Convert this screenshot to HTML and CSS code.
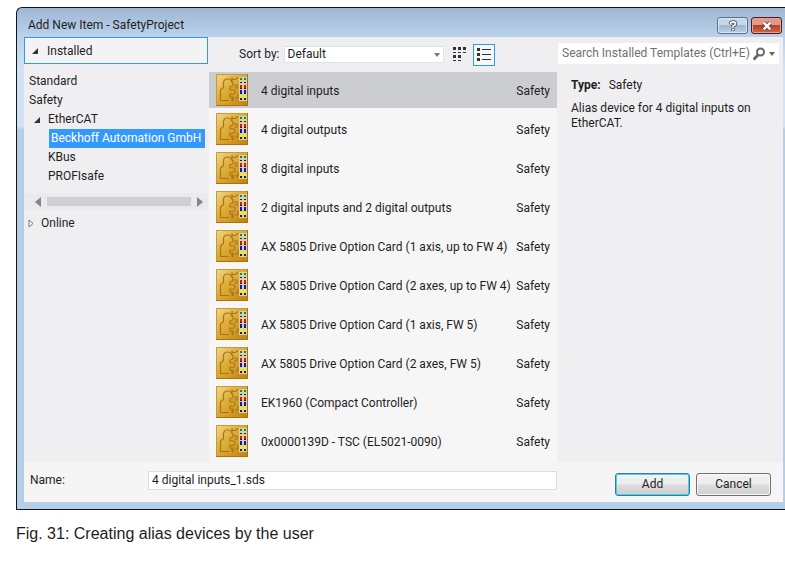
FILE: index.html
```html
<!DOCTYPE html>
<html lang="en">
<head>
<meta charset="utf-8">
<title>Add New Item - SafetyProject</title>
<link rel="stylesheet" href="styles.css">
</head>
<body>
<svg class="defs" aria-hidden="true">
  <defs>
    <linearGradient id="gold" x1="0" y1="0" x2="1" y2="1">
      <stop offset="0" stop-color="#f3d98a"/>
      <stop offset=".4" stop-color="#dfae3a"/>
      <stop offset="1" stop-color="#c08108"/>
    </linearGradient>
    <symbol id="device" viewBox="0 0 32 32">
      <path fill="url(#gold)" d="M0 0h32v32H0z"/>
      <path fill="none" stroke="#c79a38" d="M.5 31.500V.5h31"/>
      <path fill="none" stroke="#a8730c" d="M31.500 0v31.500H0"/>
      <path fill="none" stroke="#a87618" stroke-width="1.200" stroke-linejoin="round" d="M13 26.500H4.500V16l3-2.500V9q0-4 4-4t4 3M16 27v-4M16 3v5l1 1v3l-3 1v3q5-1 5 2t-5 2v3h3v4M16 5.500h3l3-2M18 11h3v3h-3M19 24h3v-4"/>
      <path fill="#d8cfae" d="M23 3h8v24h-8z"/>
      <path fill="#16883c" d="M24 4h2v2h-2zM28 4h2v2h-2z"/>
      <path fill="#222" d="M24 8h2v1h-2zM28 8h2v1h-2zM24 14h2v1h-2zM28 14h2v1h-2zM24 19h2v1h-2zM28 19h2v1h-2zM24 24h2v2h-2zM28 24h2v2h-2z"/>
      <path fill="#cf1818" d="M24 11h2v3h-2zM28 11h2v3h-2z"/>
      <path fill="#1414d0" d="M24 16h2v3h-2zM28 16h2v3h-2z"/>
      <path fill="#f0ee20" d="M24 21h2v3h-2zM28 21h2v3h-2z"/>
    </symbol>
  </defs>
</svg>
<figure class="figure">
  <section class="dialog" aria-labelledby="dialog-title">
    <header class="titlebar">
      <h1 id="dialog-title">Add New Item - SafetyProject</h1>
      <button class="caption help" aria-label="Help">
        <svg width="10" height="12" viewBox="0 0 12 14"><path fill="none" stroke="#46525f" stroke-width="4" d="M3 5V4q0-2 3-2t3 2q0 2-3 3v2M6 10v3"/><path fill="none" stroke="#fff" stroke-width="2" d="M3 5V4q0-2 3-2t3 2q0 2-3 3v2M6 10.500v2"/></svg>
      </button>
      <button class="caption close" aria-label="Close">
        <svg width="12" height="10" viewBox="0 0 14 12"><path stroke="#5c3f3d" stroke-width="5" d="M3 2l8 8M11 2l-8 8"/><path stroke="#fff" stroke-width="3" d="M3 2l8 8M11 2l-8 8"/></svg>
      </button>
    </header>
    <div class="content">
      <div class="panes">
        <nav class="sidebar" aria-label="Categories">
          <button class="installed"><svg width="8" height="8" viewBox="0 0 8 8"><path fill="#333" d="M7 1v6H1z"/></svg>Installed</button>
          <ul class="tree">
            <li>Standard</li>
            <li>Safety</li>
            <li class="branch"><svg width="8" height="8" viewBox="0 0 8 8"><path fill="#333" d="M7 1v6H1z"/></svg>EtherCAT</li>
            <li class="chosen">Beckhoff Automation GmbH</li>
            <li class="child">KBus</li>
            <li class="child">PROFIsafe</li>
          </ul>
          <div class="scrollbar">
            <svg width="6" height="10" viewBox="0 0 6 10"><path fill="#868689" d="M6 0v10L0 5z"/></svg>
            <span class="thumb"></span>
            <svg width="6" height="10" viewBox="0 0 6 10"><path fill="#868689" d="M0 0v10l6-5z"/></svg>
          </div>
          <div class="online"><svg width="6" height="10" viewBox="0 0 6 10"><path fill="#fff" stroke="#77777a" d="M1 1v7l4-3.500z"/></svg>Online</div>
        </nav>
        <main class="templates">
          <div class="toolbar">
            <label for="sort">Sort by:</label>
            <span class="sort">
              <select id="sort"><option>Default</option></select>
              <svg width="6" height="4" viewBox="0 0 6 4"><path fill="#77777a" d="M0 0h6L3 4z"/></svg>
            </span>
            <button class="view" aria-label="Small icons"><svg width="14" height="15" viewBox="0 0 14 15"><path fill="#333" d="M0 0h3v3H0zM5 0h3v3H5zM10 0h3v3h-3zM0 5h3v1H0zM5 5h3v1H5zM10 5h3v1h-3zM0 8h3v3H0zM5 8h3v3H5zM0 13h3v1H0zM5 13h3v1H5z"/></svg></button>
            <button class="view active" aria-label="List"><svg width="14" height="14" viewBox="0 0 14 14"><path fill="#333" d="M0 0h3v3H0zM5 1h9v1H5zM0 5h3v3H0zM5 6h9v1H5zM0 10h3v3H0zM5 11h9v1H5z"/></svg></button>
          </div>
          <ul class="list">
            <li class="selected"><svg class="icon"><use href="#device"/></svg><span>4 digital inputs</span><span class="kind">Safety</span></li>
            <li><svg class="icon"><use href="#device"/></svg><span>4 digital outputs</span><span class="kind">Safety</span></li>
            <li><svg class="icon"><use href="#device"/></svg><span>8 digital inputs</span><span class="kind">Safety</span></li>
            <li><svg class="icon"><use href="#device"/></svg><span>2 digital inputs and 2 digital outputs</span><span class="kind">Safety</span></li>
            <li><svg class="icon"><use href="#device"/></svg><span>AX 5805 Drive Option Card (1 axis, up to FW 4)</span><span class="kind">Safety</span></li>
            <li><svg class="icon"><use href="#device"/></svg><span>AX 5805 Drive Option Card (2 axes, up to FW 4)</span><span class="kind">Safety</span></li>
            <li><svg class="icon"><use href="#device"/></svg><span>AX 5805 Drive Option Card (1 axis, FW 5)</span><span class="kind">Safety</span></li>
            <li><svg class="icon"><use href="#device"/></svg><span>AX 5805 Drive Option Card (2 axes, FW 5)</span><span class="kind">Safety</span></li>
            <li><svg class="icon"><use href="#device"/></svg><span>EK1960 (Compact Controller)</span><span class="kind">Safety</span></li>
            <li><svg class="icon"><use href="#device"/></svg><span>0x0000139D - TSC (EL5021-0090)</span><span class="kind">Safety</span></li>
          </ul>
        </main>
        <aside class="details">
          <div class="search">
            <input type="search" aria-label="Search Installed Templates" placeholder="Search Installed Templates (Ctrl+E)">
            <svg width="12" height="14" viewBox="1 0 12 14"><circle cx="8.500" cy="5" r="3.500" fill="none" stroke="#666" stroke-width="2"/><path stroke="#666" stroke-width="3" d="M6 8l-4.500 4.500"/></svg>
            <svg class="more" width="6" height="4" viewBox="0 0 6 4"><path fill="#666" d="M0 0h6L3 4z"/></svg>
          </div>
          <p><b>Type:</b>Safety</p>
          <p>Alias device for 4 digital inputs on EtherCAT.</p>
        </aside>
      </div>
      <footer class="footer">
        <label for="name">Name:</label>
        <input id="name" type="text" value="4 digital inputs_1.sds">
        <div class="actions">
          <button class="push primary">Add</button>
          <button class="push">Cancel</button>
        </div>
      </footer>
    </div>
  </section>
  <figcaption>Fig. 31: Creating alias devices by the user</figcaption>
</figure>
</body>
</html>
```
FILE: styles.css
```css
* {
  box-sizing: border-box;
}

body {
  margin: 0;
  background: #fff;
  color: #1e1e1e;
  font: 12px/15px Roboto, "Noto Sans", sans-serif;
}

ul,
p,
h1 {
  margin: 0;
  padding: 0;
  list-style: none;
}

button,
input,
select {
  margin: 0;
  color: inherit;
  font: inherit;
}

svg {
  flex: none;
}

.defs {
  position: absolute;
  width: 0;
  height: 0;
}

.figure {
  margin: 7px 0 0 16px;
}

.dialog {
  padding: 0 2px 7px 7px;
  border: 1px solid #10151c;
  border-right: 0;
  border-top-left-radius: 6px;
  background: linear-gradient(#9fb7d3, #b9d1ea 28px, #d0e2f3 60px, #d0e2f3 118px, #b5cfe6 122px);
}

.titlebar {
  display: flex;
  align-items: center;
  gap: 3px;
  height: 29px;
  padding: 6px 1px 0 4px;
}

.titlebar h1 {
  flex: 1;
  font-size: 12px;
  font-weight: 400;
}

.caption {
  display: grid;
  place-items: center;
  width: 31px;
  height: 17px;
  padding: 0;
  border: 1px solid #5b6f86;
  border-radius: 3px;
  background: linear-gradient(#c5d7e9 45%, #9eb7d0 50%, #b9d0e6);
  box-shadow: inset 0 0 0 1px #d8e6f3;
}

.close {
  border-color: #4c1a17;
  background: linear-gradient(#dd9a8c 45%, #b83e25 50%, #cf6a48);
  box-shadow: inset 0 0 0 1px #e3a698;
}

.content {
  background: #f5f5f6;
}

.panes {
  display: grid;
  grid-template-columns: 185px 348px minmax(0, 1fr);
  background: #efeff1;
}

.sidebar {
  padding-right: 1px;
}

.installed {
  display: flex;
  align-items: center;
  gap: 8px;
  width: 100%;
  height: 27px;
  padding: 1px 6px 0;
  border: 1px solid #3399e6;
  background: #f3f3f5;
}

.tree {
  padding: 8px 3px 0 0;
  line-height: 19px;
}

.tree li {
  padding-left: 5px;
}

.tree .branch {
  display: flex;
  align-items: center;
  gap: 7px;
  padding-left: 9px;
}

.tree .child {
  padding-left: 24px;
}

.tree .chosen {
  margin-left: 25px;
  padding-left: 2px;
  background: #3399ff;
  color: #fff;
  white-space: nowrap;
}

.scrollbar {
  display: flex;
  align-items: center;
  gap: 6px;
  height: 17px;
  margin-top: 7px;
  padding: 0 5px 0 11px;
  background: #eaeaec;
}

.thumb {
  flex: 1;
  height: 9px;
  background: #d0d0d2;
}

.online {
  display: flex;
  align-items: center;
  gap: 7px;
  padding: 6px 4px;
}

.templates {
  min-width: 0;
  background: #f6f6f6;
}

.toolbar {
  display: flex;
  align-items: center;
  height: 35px;
  padding-left: 30px;
  background: #efeff1;
}

.sort {
  position: relative;
  width: 160px;
  margin: 0 5px 0 4px;
}

.sort select {
  display: block;
  width: 100%;
  height: 17px;
  padding: 0 3px;
  border: 1px solid #e2e3e6;
  border-radius: 0;
  appearance: none;
  background: #fff;
}

.sort svg {
  position: absolute;
  top: 7px;
  right: 4px;
  pointer-events: none;
}

.view {
  display: grid;
  place-items: center;
  width: 22px;
  height: 22px;
  margin-right: 2px;
  padding: 0;
  border: 1px solid transparent;
  background: none;
}

.view.active {
  border-color: #3399e6;
  background: #f6f8fb;
}

.list {
  display: grid;
  grid-template-columns: minmax(0, 1fr);
  gap: 3px;
  padding-bottom: 3px;
}

.list li {
  display: flex;
  align-items: center;
  height: 36px;
  padding: 0 7px;
  white-space: nowrap;
}

.list span {
  padding-top: 2px;
}

.list .selected {
  background: #cccdd0;
}

.icon {
  width: 32px;
  height: 32px;
  margin-right: 13px;
}

.kind {
  margin-left: auto;
}

.details {
  padding: 6px 4px 0 1px;
}

.search {
  display: flex;
  align-items: center;
  height: 21px;
  margin-bottom: 14px;
  padding: 0 4px;
  background: #fff;
}

.search input {
  flex: 1;
  min-width: 0;
  padding: 0;
  border: 0;
  appearance: none;
  background: none;
}

.search input::-webkit-search-cancel-button {
  display: none;
}

.search input::placeholder {
  color: #707070;
  opacity: 1;
}

.search .more {
  margin-left: 4px;
}

.details p {
  margin: 0 13px 8px;
}

.details b {
  margin-right: 8px;
}

.footer {
  display: flex;
  align-items: center;
  height: 40px;
  padding: 0 12px 0 6px;
}

.footer label {
  width: 118px;
}

.footer input {
  width: 409px;
  height: 19px;
  padding: 0 3px;
  border: 1px solid #dcdde0;
  background: #fff;
}

.footer label,
.footer input {
  margin-bottom: 4px;
}

.actions {
  display: flex;
  gap: 6px;
  margin: 5px 0 0 auto;
}

.push {
  width: 75px;
  height: 23px;
  padding: 0;
  border: 1px solid #707070;
  border-radius: 3px;
  background: linear-gradient(#f3f3f3, #ebebeb 48%, #dcdcdc 52%, #cfcfcf);
  box-shadow: inset 0 0 0 1px #f8f8f8;
}

.primary {
  border-color: #2c7f9e;
  box-shadow: inset 0 0 0 1px #48d1ee;
}

figcaption {
  padding-top: 15px;
  font: 16px/18px "Liberation Sans", Arial, sans-serif;
}
```
